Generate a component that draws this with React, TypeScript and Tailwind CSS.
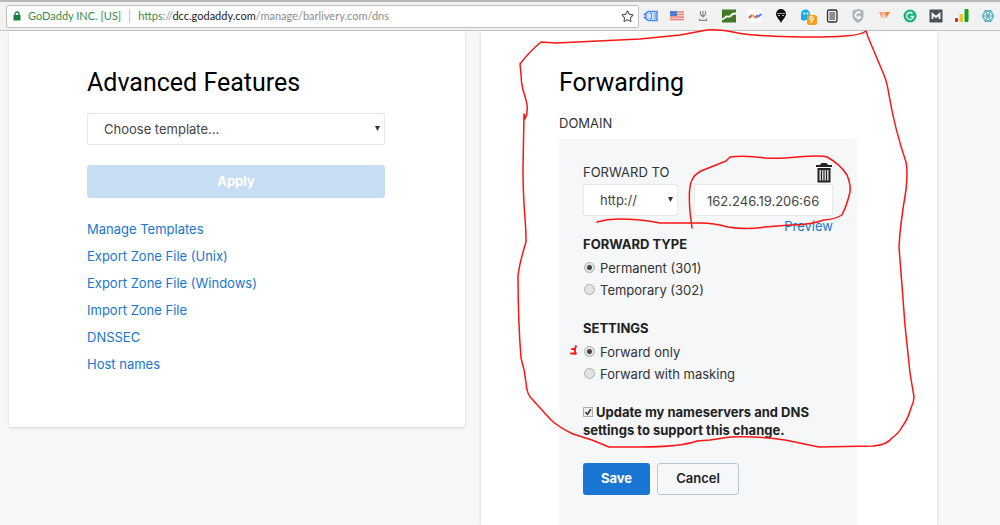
import { useState } from 'react';
import type { ReactNode } from 'react';
import { Star } from 'lucide-react';

const templateLinks = [
  'Manage Templates',
  'Export Zone File (Unix)',
  'Export Zone File (Windows)',
  'Import Zone File',
  'DNSSEC',
  'Host names',
];

// Toolbar extensions, left to right. All drawn on a 16x16 grid.
const extensions: { name: string; icon: ReactNode }[] = [
  {
    name: 'Tag',
    icon: (
      <>
        <path d="M5 3.500h9v9H5L1.500 9.500H3v-3H1.500z" fill="#dbe9ff" stroke="#4a8cf7" strokeWidth="1.500" />
        <path d="M6.500 5.500h2v5h-2M11 5.500h1v5h-1" fill="none" stroke="#4a8cf7" />
      </>
    ),
  },
  {
    name: 'Flag',
    icon: (
      <>
        <path d="M1 3h14v10H1z" fill="#fbe3e1" />
        <path d="M1 4h14M1 6.500h14M1 9h14M1 11.500h14" stroke="#ec8178" strokeWidth="1.300" />
        <path d="M1 3h7v5H1z" fill="#4f7fd0" />
      </>
    ),
  },
  {
    name: 'Downloader',
    icon: (
      <g fill="none" stroke="#8b8b8b" strokeWidth="1.200">
        <path d="M5.500 3v3M8 3v5M10.500 3v3M5 6l3 3 3-3M4.500 10.500v1.800h7v-1.800" />
      </g>
    ),
  },
  {
    name: 'Rank',
    icon: (
      <>
        <path d="M1 1.500h14v13H1z" fill="#437a26" />
        <path d="M1 11.500c3-1 3-3 5-3s3 1 4-1 3-2 5-2" fill="none" stroke="#fff" strokeWidth="1.800" />
      </>
    ),
  },
  {
    name: 'Trends',
    icon: (
      <>
        <path d="M1 1.500h14v13H1z" fill="#fff" />
        <path d="M2 10l3-3" stroke="#e0453a" strokeWidth="1.800" />
        <path d="M5 7l4 3" stroke="#f59a35" strokeWidth="1.800" />
        <path d="M8.500 10l2-3" stroke="#9b54c6" strokeWidth="1.800" />
        <path d="M10.500 9l4-3" stroke="#3c7ff0" strokeWidth="1.800" />
      </>
    ),
  },
  {
    name: 'Incognito pin',
    icon: (
      <>
        <path d="M8 15C6 11 3 9 3 6a5 5 0 0 1 10 0c0 3-3 5-5 9z" fill="#111" />
        <path d="M4 5.500h8" stroke="#999" />
        <path d="M5 7.500h2M9 7.500h2" stroke="#bbb" />
      </>
    ),
  },
  {
    name: 'Ghost',
    icon: (
      <>
        <path d="M2 12V6a4.500 4.500 0 0 1 9 0v5l-2 1.500-2-1-2 1.500-1.500-1z" fill="#12aeef" />
        <circle cx="5.300" cy="5.500" r="1.100" fill="#fff" />
        <circle cx="8.500" cy="5.500" r="1.100" fill="#fff" />
      </>
    ),
  },
  {
    name: 'Page list',
    icon: (
      <>
        <rect x="3.500" y="2" width="9.500" height="12" rx="1.500" fill="#e8e8e8" stroke="#333" strokeWidth="1.300" />
        <path d="M5.500 5h5.500M5.500 7h5.500M5.500 9h5.500M5.500 11h5.500" stroke="#333" />
      </>
    ),
  },
  {
    name: 'Shield',
    icon: (
      <>
        <path d="M2.500 2.500L8 1l5.500 1.500V8c0 3-2.500 5.500-5.500 7-3-1.500-5.500-4-5.500-7z" fill="#aeb4bf" />
        <path d="M10.500 5A3 3 0 1 0 10.500 9.500L8 8" fill="none" stroke="#fff" strokeWidth="1.500" />
      </>
    ),
  },
  {
    name: 'Wave',
    icon: (
      <>
        <path d="M3 4h4l-1 7z" fill="#f2a071" />
        <path d="M6.500 4H10l-2 8z" fill="#f5b58c" />
        <path d="M9.500 4H14l-4 6z" fill="#ee7d34" />
      </>
    ),
  },
  {
    name: 'Grammar',
    icon: (
      <>
        <circle cx="8" cy="8" r="6.500" fill="#15b873" />
        <path d="M10.500 5.500A3.500 3.500 0 1 0 11.500 8.500H8.500" fill="none" stroke="#fff" strokeWidth="1.300" />
      </>
    ),
  },
  {
    name: 'Metrics',
    icon: (
      <>
        <path d="M1.500 1.500h13v13h-13z" fill="#4b5257" />
        <path d="M4.500 11V6L8 9l3.500-3v5" fill="none" stroke="#fff" strokeWidth="1.800" />
      </>
    ),
  },
  {
    name: 'Signal',
    icon: (
      <>
        <rect x="1" y="10" width="3" height="4" rx="1" fill="#d32626" />
        <rect x="5.500" y="6" width="3.500" height="8" rx="1" fill="#efc32c" />
        <rect x="10.500" y="1" width="4" height="13" rx="1" fill="#19a01e" />
      </>
    ),
  },
  {
    name: 'Atom',
    icon: (
      <g fill="none" stroke="#5ab4c4">
        <circle cx="8" cy="8" r="2" />
        <circle cx="8" cy="8" r="4.500" />
        <path d="M5 2.500h6L14 8l-3 5.500H5L2 8zM2 8h12M5 2.500l6 11M11 2.500l-6 11" />
      </g>
    ),
  },
];

function BrowserBar() {
  return (
    <header className="flex h-[31px] items-center border-t-2 border-b border-t-[#b8b8b8] border-b-[#c4c4c4] bg-[#f2f2f2] pr-1 pl-[6px] font-[Lato,sans-serif] text-[11px]">
      <div className="flex h-[23px] flex-1 items-center rounded-[2px] border border-[#c0c0c0] bg-white pr-1 pl-[6px]">
        <svg className="h-[10px] w-2" viewBox="0 0 8 10" aria-hidden="true">
          <path d="M0.500 4h7v5.500h-7z" fill="#178038" />
          <path d="M2 4.500V3a2 2 0 0 1 4 0v1.500" fill="none" stroke="#178038" strokeWidth="1.300" />
        </svg>
        <span className="ml-[7px] text-[#3a8a50]">GoDaddy INC. [US]</span>
        <span className="mx-2 h-[13px] w-px bg-[#c4c4c4]" />
        <span className="flex-1 text-[#8c8c8c]">
          <span className="text-[#3a8a50]">https</span>://<span className="text-[#222]">dcc.godaddy.com</span>
          /manage/barlivery.com/dns
        </span>
        <button type="button" aria-label="Bookmark this page">
          <Star className="h-[13px] w-[13px] text-[#555]" strokeWidth={2} />
        </button>
      </div>
      <div className="ml-1 flex w-[353px] justify-between">
        {extensions.map(ext => (
          <button key={ext.name} type="button" aria-label={ext.name} className="relative h-4 w-4">
            <svg className="h-4 w-4" viewBox="0 0 16 16" aria-hidden="true">{ext.icon}</svg>
            {ext.name === 'Ghost' && (
              <span className="absolute top-[7px] left-2 h-[10px] w-[10px] rounded-[2px] bg-[#f99d1c] text-center text-[9px] leading-[10px] font-semibold text-white">
                9
              </span>
            )}
          </button>
        ))}
      </div>
    </header>
  );
}

function SelectArrow() {
  return (
    <svg className="pointer-events-none absolute top-[13px] right-[5px] h-[5px] w-[5px]" viewBox="0 0 5 5" aria-hidden="true">
      <path d="M0 0h5L2.500 5z" fill="#333" />
    </svg>
  );
}

interface RadioProps {
  name: string;
  label: string;
  checked: boolean;
  onChange: () => void;
}

function Radio({ name, label, checked, onChange }: RadioProps) {
  return (
    <label className="flex h-[22px] items-center gap-[5px] text-[#333]">
      <input
        type="radio"
        name={name}
        checked={checked}
        onChange={onChange}
        className="mb-1 ml-px h-[11px] w-[11px] appearance-none rounded-full border border-[#b0b0b0] bg-[#e3e3e3] checked:bg-[radial-gradient(circle,#444_0_2px,#e3e3e3_3px)]"
      />
      {label}
    </label>
  );
}

function AdvancedFeatures() {
  return (
    <section className="self-start rounded-[2px] bg-white pt-[35px] pr-20 pb-[49px] pl-[78px] shadow-[0_1px_3px_rgba(0,0,0,0.15)]">
      <h2 className="font-[Roboto,sans-serif] text-[25px] leading-[34px] whitespace-nowrap text-black">Advanced Features</h2>
      <div className="relative mt-[13px]">
        <select aria-label="Template" className="h-8 w-full appearance-none rounded-[2px] border border-[#e8e8e8] bg-white px-4 pt-[2px] text-[#444]">
          <option>Choose template...</option>
        </select>
        <SelectArrow />
      </div>
      <button type="button" disabled className="mt-5 h-[33px] w-full rounded-[3px] bg-[#c7ddf4] font-bold text-white">
        Apply
      </button>
      <ul className="mt-[18px] leading-[27px]">
        {templateLinks.map(link => (
          <li key={link}>
            <a href="#" className="text-[#1976d2]">{link}</a>
          </li>
        ))}
      </ul>
    </section>
  );
}

function Forwarding() {
  const [forwardType, setForwardType] = useState('301');
  const [mode, setMode] = useState('only');
  const [updateDns, setUpdateDns] = useState(true);

  return (
    <section className="bg-white pt-[35px] pr-20 pl-[78px] shadow-[0_1px_3px_rgba(0,0,0,0.15)]">
      <h2 className="font-[Roboto,sans-serif] text-[25px] leading-[34px] text-black">Forwarding</h2>
      <h3 className="mt-[13px] leading-5 text-[#333]">DOMAIN</h3>
      <form className="mt-[6px] bg-[#f5f7f9] px-6 pt-[22px] pb-[30px]" onSubmit={e => e.preventDefault()}>
        <div className="flex items-center justify-between">
          <label htmlFor="forward-scheme" className="leading-[23px] text-[#333]">FORWARD TO</label>
          <button type="button" aria-label="Delete forwarding" className="mr-px">
            <svg className="h-5 w-4" viewBox="0 0 16 20" aria-hidden="true">
              <path d="M0 2h4L5.500 0h5L12 2h4v2H0z" fill="#222" />
              <path d="M2.500 6h11v12.500h-11z" fill="#e8e8e8" stroke="#222" strokeWidth="2" />
              <path d="M5.500 6v12M8 6v12M10.500 6v12" stroke="#222" strokeWidth="1.200" />
            </svg>
          </button>
        </div>
        <div className="flex gap-4">
          <div className="relative w-[95px]">
            <select id="forward-scheme" className="h-8 w-full appearance-none rounded-[2px] border border-[#e8e8e8] bg-white px-4 pt-[2px] text-[#444]">
              <option>http://</option>
              <option>https://</option>
            </select>
            <SelectArrow />
          </div>
          <input
            type="text"
            aria-label="Destination"
            defaultValue="162.246.19.206:6666"
            className="h-8 min-w-0 flex-1 rounded-[2px] border border-[#e8e8e8] bg-white px-3 pt-[2px] text-[#444]"
          />
        </div>
        <div className="text-right leading-5">
          <a href="#" className="text-[#1976d2]">Preview</a>
        </div>

        <fieldset>
          <legend className="leading-4 font-bold text-[#222]">FORWARD TYPE</legend>
          <div className="mt-[6px]">
            <Radio name="type" label="Permanent (301)" checked={forwardType === '301'} onChange={() => setForwardType('301')} />
            <Radio name="type" label="Temporary (302)" checked={forwardType === '302'} onChange={() => setForwardType('302')} />
          </div>
        </fieldset>

        <fieldset className="mt-[18px]">
          <legend className="leading-4 font-bold text-[#222]">SETTINGS</legend>
          <div className="mt-[6px]">
            <Radio name="mode" label="Forward only" checked={mode === 'only'} onChange={() => setMode('only')} />
            <Radio name="mode" label="Forward with masking" checked={mode === 'mask'} onChange={() => setMode('mask')} />
          </div>
        </fieldset>

        <label className="mt-[17px] block leading-[18px] font-bold text-[#222]">
          <span className="relative mr-[3px] inline-block h-[10px] w-[10px]">
            <input
              type="checkbox"
              checked={updateDns}
              onChange={e => setUpdateDns(e.target.checked)}
              className="block h-[10px] w-[10px] appearance-none border border-[#aaa] bg-[#eee]"
            />
            {updateDns && (
              <svg className="pointer-events-none absolute inset-0 h-[10px] w-[10px]" viewBox="0 0 10 10" aria-hidden="true">
                <path d="M2.500 5.300l2 2 3.300-5" fill="none" stroke="#333" strokeWidth="1.600" />
              </svg>
            )}
          </span>
          Update my nameservers and DNS settings to support this change.
        </label>

        <div className="mt-6 flex gap-[7px] font-bold">
          <button type="submit" className="h-8 w-[67px] rounded-[3px] bg-[#1976d2] text-white">Save</button>
          <button type="button" className="h-8 w-[82px] rounded-[3px] border border-[#bcc6d0] font-semibold text-[#222]">Cancel</button>
        </div>
      </form>
    </section>
  );
}

// Freehand red pen marks lying over the page
function PenMarks() {
  return (
    <svg
      className="pointer-events-none absolute top-0 left-0 h-[525px] w-[1000px]"
      viewBox="0 0 1000 525"
      fill="none"
      stroke="#fb1515"
      strokeWidth="1.500"
      strokeLinecap="round"
      strokeLinejoin="round"
      aria-hidden="true"
    >
      <path d="M524 114L525 119Q528 113 527 105Q526 99 523 90Q521 82 521 74L520 64Q530 51 541 42L556 43L640 39L680 35L707 30Q717 29 733 32Q745 35 770 36Q815 38 845 36Q861 35 866 31L868 37L884 75Q887 82 889 95Q895 130 906 162Q908 172 906 190Q900 225 899 247L905 325L910 373L914 397Q914 402 911 408Q908 419 902 427Q899 433 892 438Q887 445 873 446L819 447L785 440Q760 436 730 437L710 440L697 441Q680 447 640 447L609 447L592 440L573 434Q560 428 551 420L532 399Q527 395 526 383Q525 371 521 358Q518 320 518 275Q520 261 526 242Q526 230 525 218Q523 195 523 168L524 114" />
      <path d="M692 228L690 212Q688 187 692 180Q694 175 701 171L726 161L730 157Q745 155 765 158Q777 159 798 157Q821 155 827 157Q840 164 847 175Q851 185 850 192Q847 205 842 215Q836 219 824 220Q810 225 790 225L765 227Q745 230 728 227Q714 223 700 223L660 223Q641 219 618 219Q607 219 597 222" />
      <path d="M572 349h3M576 346l-1 3v5M571 353.500h5" strokeWidth="1.800" />
    </svg>
  );
}

export default function App() {
  return (
    <div className="relative min-h-screen bg-[#f5f7f9] font-[Inter,sans-serif] text-[13px]">
      <BrowserBar />
      <main className="grid grid-cols-2 gap-4 pr-[63px] pl-[9px]">
        <AdvancedFeatures />
        <Forwarding />
      </main>
      <PenMarks />
    </div>
  );
}
